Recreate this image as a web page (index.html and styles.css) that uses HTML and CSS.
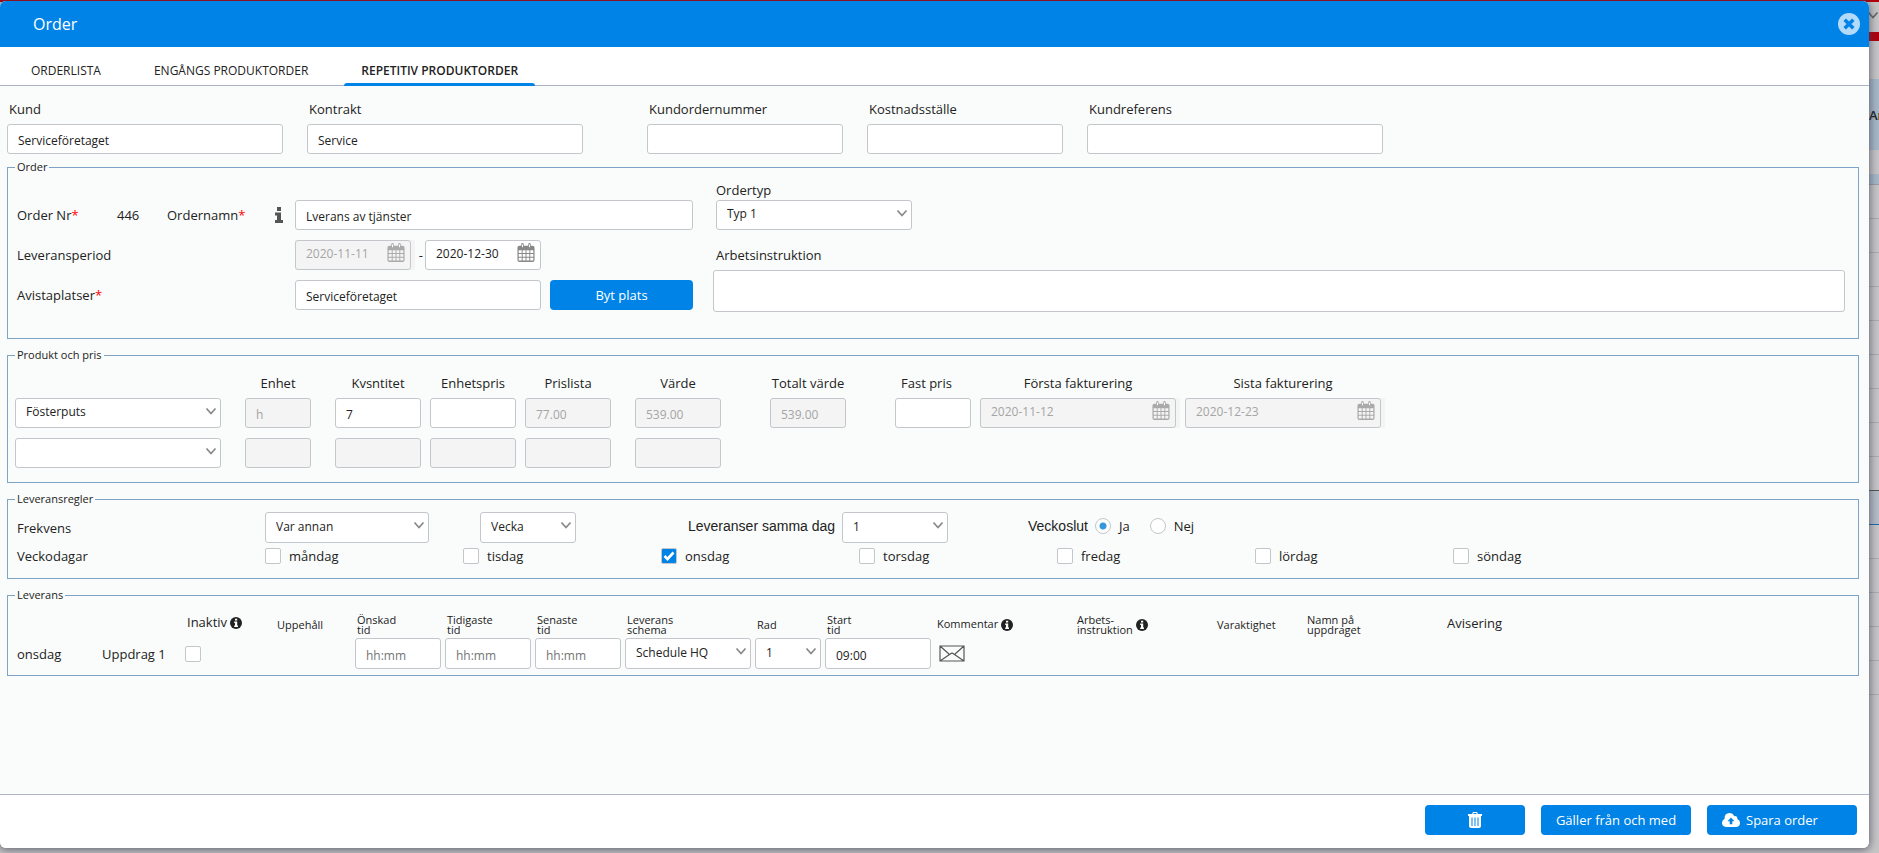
FILE: index.html
```
<!DOCTYPE html>
<html lang="sv">
<head>
  <meta charset="UTF-8">
  <meta name="viewport" content="width=device-width, initial-scale=1.0">
  <title>Order</title>
  <link rel="stylesheet" href="styles.css">
</head>
<body>
  <svg class="sprite" aria-hidden="true">
    <symbol id="chevron" viewBox="0 0 12 8"><path d="M1.500 1.500 6 6.500 10.500 1.500" fill="none" stroke="currentColor" stroke-width="1.700"/></symbol>
    <symbol id="calendar" viewBox="0 0 18 20">
      <path fill="currentColor" fill-rule="evenodd" d="M2 3h2V1.500Q4 0 5.300 0T6.600 1.500V3h4.800V1.500Q11.400 0 12.700 0T14 1.500V3h2q2 0 2 2v13q0 2-2 2H2q-2 0-2-2V5q0-2 2-2zM1.300 7.500v3h3.200v-3zm4.200 0v3h3v-3zm4 0v3h3v-3zm4 0v3h3.200v-3zm-12.200 4v3h3.200v-3zm4.200 0v3h3v-3zm4 0v3h3v-3zm4 0v3h3.200v-3zm-12.200 4v3h3.200v-3zm4.200 0v3h3v-3zm4 0v3h3v-3zm4 0v3h3.200v-3z"/>
      <path d="M5.300 1.500v3M12.700 1.500v3" stroke="#fff" stroke-width="1"/>
    </symbol>
    <symbol id="info" viewBox="0 0 12 12">
      <circle cx="6" cy="6" r="6" fill="currentColor"/>
      <path fill="#fff" d="M5 1.700h2.200v1.800H5zM4.200 4.500h3v4h.8V10H4.200V8.500H5V6h-.8z"/>
    </symbol>
  </svg>

  <div class="backdrop" aria-hidden="true">
    <div class="bar-top"><svg class="bar-icon"><use href="#chevron"/></svg></div>
    <div class="bar-gap"></div>
    <div class="bar-head">An</div>
    <div class="bar-space"></div>
    <div class="bar-filter"></div>
    <div class="bar-row"></div>
    <div class="bar-row"></div>
    <div class="bar-row"></div>
    <div class="bar-row"></div>
    <div class="bar-row"></div>
    <div class="bar-row"></div>
    <div class="bar-row"></div>
    <div class="bar-row"></div>
    <div class="bar-row dark"></div>
    <div class="bar-row selected"></div>
    <div class="bar-row"></div>
    <div class="bar-row"></div>
    <div class="bar-row"></div>
    <div class="bar-row"></div>
    <div class="bar-row"></div>
  </div>

  <form class="dialog">
    <header class="dialog-header">
      <h1>Order</h1>
      <button type="button" class="close" aria-label="Stäng">
        <svg viewBox="0 0 21 21"><circle cx="10.500" cy="10.500" r="10.500" fill="#b3daf8"/><path d="M6.400 6.400l8.200 8.200M14.600 6.400l-8.200 8.200" stroke="#0083e6" stroke-width="3.400"/></svg>
      </button>
    </header>

    <nav class="tabs">
      <a href="#orderlista">ORDERLISTA</a>
      <a href="#engangs">ENGÅNGS PRODUKTORDER</a>
      <a href="#repetitiv" class="active">REPETITIV PRODUKTORDER</a>
    </nav>

    <main class="dialog-body">
      <div class="customer">
        <div class="field wide"><label for="kund">Kund</label><input type="text" id="kund" value="Serviceföretaget"></div>
        <div class="field wide contract"><label for="kontrakt">Kontrakt</label><input type="text" id="kontrakt" value="Service"></div>
        <div class="field"><label for="kundorder">Kundordernummer</label><input type="text" id="kundorder"></div>
        <div class="field"><label for="kostnad">Kostnadsställe</label><input type="text" id="kostnad"></div>
        <div class="field reference"><label for="kundref">Kundreferens</label><input type="text" id="kundref"></div>
      </div>

      <fieldset class="order">
        <legend>Order</legend>
        <div class="order-left">
          <div class="row">
            <div class="row-label">
              <span class="nr-label">Order Nr<b>*</b></span>
              <span class="nr">446</span>
              <label for="ordernamn">Ordernamn<b>*</b></label>
              <svg class="info-i" viewBox="0 0 8 16"><path fill="#555" d="M2 0h4v4H2zM0 5.500h6V13h2v3H0v-3h2V8.500H0z"/></svg>
            </div>
            <input type="text" id="ordernamn" class="grow" value="Lverans av tjänster">
          </div>
          <div class="row">
            <label class="row-label" for="period-from">Leveransperiod</label>
            <div class="date disabled"><input type="text" id="period-from" value="2020-11-11" disabled><svg><use href="#calendar"/></svg></div>
            <span class="dash">-</span>
            <div class="date"><input type="text" aria-label="Till datum" value="2020-12-30"><svg><use href="#calendar"/></svg></div>
          </div>
          <div class="row">
            <label class="row-label" for="plats">Avistaplatser<b>*</b></label>
            <input type="text" id="plats" class="grow" value="Serviceföretaget">
            <button type="button" class="btn place">Byt plats</button>
          </div>
        </div>
        <div class="order-right">
          <label for="ordertyp">Ordertyp</label>
          <div class="select type"><select id="ordertyp"><option>Typ 1</option></select><svg><use href="#chevron"/></svg></div>
          <label for="instruktion" class="instruction-label">Arbetsinstruktion</label>
          <textarea id="instruktion"></textarea>
        </div>
      </fieldset>

      <fieldset class="product">
        <legend>Produkt och pris</legend>
        <div class="col name">
          <span></span>
          <div class="select"><select aria-label="Produkt 1"><option>Fösterputs</option></select><svg><use href="#chevron"/></svg></div>
          <div class="select"><select aria-label="Produkt 2"><option></option></select><svg><use href="#chevron"/></svg></div>
        </div>
        <div class="col unit gap-md"><label for="enhet">Enhet</label><input type="text" id="enhet" value="h" disabled><input type="text" aria-label="Enhet 2" disabled></div>
        <div class="col gap-md"><label for="kvantitet">Kvsntitet</label><input type="text" id="kvantitet" value="7"><input type="text" aria-label="Kvsntitet 2" disabled></div>
        <div class="col"><label for="enhetspris">Enhetspris</label><input type="text" id="enhetspris"><input type="text" aria-label="Enhetspris 2" disabled></div>
        <div class="col"><label for="prislista">Prislista</label><input type="text" id="prislista" value="77.00" disabled><input type="text" aria-label="Prislista 2" disabled></div>
        <div class="col gap-md"><label for="varde">Värde</label><input type="text" id="varde" value="539.00" disabled><input type="text" aria-label="Värde 2" disabled></div>
        <div class="col total gap-lg"><label for="totalt">Totalt värde</label><input type="text" id="totalt" value="539.00" disabled></div>
        <div class="col total gap-lg fixed"><label for="fastpris">Fast pris</label><input type="text" id="fastpris"></div>
        <div class="col invoice"><label for="forsta">Första fakturering</label><div class="date disabled"><input type="text" id="forsta" value="2020-11-12" disabled><svg><use href="#calendar"/></svg></div></div>
        <div class="col invoice"><label for="sista">Sista fakturering</label><div class="date disabled"><input type="text" id="sista" value="2020-12-23" disabled><svg><use href="#calendar"/></svg></div></div>
      </fieldset>

      <fieldset class="rules">
        <legend>Leveransregler</legend>
        <div class="row">
          <label class="rule-label" for="frekvens">Frekvens</label>
          <div class="select freq"><select id="frekvens"><option>Var annan</option></select><svg><use href="#chevron"/></svg></div>
          <div class="select week"><select aria-label="Period"><option>Vecka</option></select><svg><use href="#chevron"/></svg></div>
          <label class="plain same-day" for="sammadag">Leveranser samma dag</label>
          <div class="select count"><select id="sammadag"><option>1</option></select><svg><use href="#chevron"/></svg></div>
          <span class="plain weekend">Veckoslut</span>
          <label class="check yes"><input type="radio" name="veckoslut" checked>Ja</label>
          <label class="check no"><input type="radio" name="veckoslut">Nej</label>
        </div>
        <div class="row days">
          <span class="rule-label">Veckodagar</span>
          <label class="check"><input type="checkbox">måndag</label>
          <label class="check"><input type="checkbox">tisdag</label>
          <label class="check"><input type="checkbox" checked>onsdag</label>
          <label class="check"><input type="checkbox">torsdag</label>
          <label class="check"><input type="checkbox">fredag</label>
          <label class="check"><input type="checkbox">lördag</label>
          <label class="check"><input type="checkbox">söndag</label>
        </div>
      </fieldset>

      <fieldset class="delivery">
        <legend>Leverans</legend>
        <table>
          <colgroup>
            <col class="c-day"><col class="c-task"><col class="c-time"><col class="c-pause"><col class="c-time"><col class="c-time"><col class="c-time">
            <col class="c-schema"><col class="c-row"><col class="c-start"><col class="c-wide"><col class="c-wide"><col class="c-time"><col class="c-wide"><col>
          </colgroup>
          <thead>
            <tr>
              <th></th>
              <th></th>
              <th class="big">Inaktiv <svg class="info"><use href="#info"/></svg></th>
              <th>Uppehåll</th>
              <th>Önskad<br>tid</th>
              <th>Tidigaste<br>tid</th>
              <th>Senaste<br>tid</th>
              <th>Leverans<br>schema</th>
              <th>Rad</th>
              <th>Start<br>tid</th>
              <th>Kommentar <svg class="info"><use href="#info"/></svg></th>
              <th><span class="two">Arbets-<br>instruktion</span> <svg class="info"><use href="#info"/></svg></th>
              <th>Varaktighet</th>
              <th>Namn på<br>uppdraget</th>
              <th class="big">Avisering</th>
            </tr>
          </thead>
          <tbody>
            <tr>
              <td class="text">onsdag</td>
              <td>Uppdrag 1</td>
              <td><input type="checkbox" aria-label="Inaktiv"></td>
              <td></td>
              <td><input type="text" aria-label="Önskad tid" placeholder="hh:mm"></td>
              <td><input type="text" aria-label="Tidigaste tid" placeholder="hh:mm"></td>
              <td><input type="text" aria-label="Senaste tid" placeholder="hh:mm"></td>
              <td><div class="select"><select aria-label="Leveransschema"><option>Schedule HQ</option></select><svg><use href="#chevron"/></svg></div></td>
              <td><div class="select"><select aria-label="Rad"><option>1</option></select><svg><use href="#chevron"/></svg></div></td>
              <td><input type="text" aria-label="Starttid" value="09:00"></td>
              <td>
                <button type="button" class="mail" aria-label="Kommentar">
                  <svg viewBox="0 0 26 17"><path d="M1 1h24v15H1zM1 1l9.500 8.500 2.500-1.500 2.500 1.500L25 1M1 16l9.500-6.500M25 16l-9.500-6.500" fill="none" stroke="#555" stroke-width="1.200"/></svg>
                </button>
              </td>
              <td></td>
              <td></td>
              <td></td>
              <td></td>
            </tr>
          </tbody>
        </table>
      </fieldset>
    </main>

    <footer class="dialog-footer">
      <button type="button" class="btn delete" aria-label="Ta bort">
        <svg viewBox="0 0 14 16"><path fill="#fff" fill-rule="evenodd" d="M4 2l1-2h4l1 2h4v2h-1v10q0 2-2 2H3q-2 0-2-2V4H0V2zM5.300 2h3.400l-.5-.9H5.800zM3.500 5.500V14h1V5.500zm3 0V14h1V5.500zm3 0V14h1V5.500z"/></svg>
      </button>
      <button type="button" class="btn">Gäller från och med</button>
      <button type="submit" class="btn save">
        <svg viewBox="0 0 18 14"><path fill="#fff" fill-rule="evenodd" d="M4 14Q0 13.500 0 9.800 0 7.200 2.500 6 2.300 0 7.500 0q3.400 0 4.700 3.200 3-.8 3.300 3Q18 7 18 10q0 3.500-3.500 4zM9 4.500L5.500 8.200h2.200v3h2.600v-3h2.200z"/></svg>
        Spara order
      </button>
    </footer>
  </form>
</body>
</html>
```
FILE: styles.css
```
* {
  box-sizing: border-box;
}

body {
  margin: 0;
  font-family: "Open Sans", "Noto Sans", sans-serif;
  font-size: 13px;
  line-height: 20px;
  color: #222;
  background-color: #c6c6c7;
}

input,
select,
textarea,
button {
  font-family: inherit;
  font-size: 12px;
  color: #222;
}

b {
  color: #f00;
  font-weight: normal;
}

.sprite {
  position: absolute;
  width: 0;
  height: 0;
}

/* Page behind the dialog */
.backdrop {
  position: absolute;
  inset: 0;
  overflow: hidden;
  display: flex;
  flex-direction: column;
  align-items: stretch;
}

.bar-top {
  height: 41px;
  border-top: 2px solid #b0000c;
  border-bottom: 9px solid #b0000c;
  display: flex;
  justify-content: flex-end;
}

.bar-icon {
  width: 12px;
  height: 8px;
  margin-top: 9px;
  color: #666;
}

.bar-gap {
  height: 38px;
}

.bar-head {
  height: 71px;
  padding-left: calc(100% - 10px);
  line-height: 72px;
  white-space: nowrap;
  font-weight: 600;
  background-color: #a6b8c8;
}

.bar-space {
  height: 24px;
}

.bar-filter {
  height: 11px;
  background-color: #a6b8c8;
  border-bottom: 1px solid #999ca6;
}

.bar-row {
  height: 34px;
  border-bottom: 1px solid #aaacb0;
}

.bar-row.dark {
  border-color: #555;
}

.bar-row.selected {
  background-color: #b4bdc7;
  border-color: #1a68ad;
}

/* Dialog */
.dialog {
  position: relative;
  display: flex;
  flex-direction: column;
  min-height: calc(100vh - 6px);
  margin: 1px 10px 5px 0;
  background-color: #fafcfb;
  border-radius: 6px;
  overflow: hidden;
  box-shadow: 0 1px 8px 1px rgba(60, 60, 80, 0.7);
}

.dialog-header {
  display: flex;
  justify-content: space-between;
  align-items: center;
  height: 46px;
  padding: 0 9px 0 33px;
  background-color: #0083e6;
}

h1 {
  margin: 0;
  font-size: 16px;
  font-weight: normal;
  color: #fff;
}

.close {
  width: 22px;
  height: 22px;
  padding: 0;
  border: none;
  background: none;
  cursor: pointer;
}

.close svg {
  display: block;
  width: 22px;
  height: 22px;
}

.tabs {
  display: flex;
  gap: 19px;
  height: 39px;
  padding-left: 14px;
  background-color: #fff;
  border-bottom: 1px solid #abb4c4;
}

.tabs a {
  position: relative;
  height: 39px;
  padding: 14px 17px 0;
  font-size: 12px;
  line-height: 20px;
  color: #222;
  text-decoration: none;
}

.tabs a.active {
  font-weight: 600;
}

.tabs a.active::after {
  content: "";
  position: absolute;
  left: 0;
  right: 0;
  bottom: 0;
  height: 3px;
  border-radius: 3px 3px 0 0;
  background-color: #0083e6;
}

.dialog-body {
  flex: 1;
  padding: 13px 10px 20px 7px;
}

/* Inputs */
input[type="text"],
select,
textarea {
  display: block;
  width: 100%;
  height: 30px;
  border: 1px solid #c3c6cb;
  border-radius: 3px;
  background-color: #fff;
  outline: none;
}

input[type="text"] {
  padding: 3px 4px 0 10px;
}

input[type="text"]:disabled {
  color: #a5a5a5;
  background-color: #f4f4f4;
}

input::placeholder {
  color: #757575;
}

.select {
  position: relative;
}

.select select {
  appearance: none;
  padding: 0 20px 3px 10px;
}

.select svg {
  position: absolute;
  top: 9px;
  right: 4px;
  width: 12px;
  height: 8px;
  color: #888;
  pointer-events: none;
}

.date {
  position: relative;
  width: 116px;
}

.date input[type="text"] {
  padding: 0 30px 3px 10px;
}

.date svg {
  position: absolute;
  top: 3px;
  right: 6px;
  width: 18px;
  height: 19px;
  color: #888;
}

.date.disabled {
  background-color: #f4f4f4;
  box-shadow: 4px 0 0 #f4f4f4;
}

.date.disabled svg {
  color: #aaa;
}

input[type="checkbox"],
input[type="radio"] {
  appearance: none;
  flex: none;
  display: block;
  width: 16px;
  height: 16px;
  margin: 0;
  border: 1px solid #c3c6cb;
  border-radius: 2px;
  background-color: #fff;
}

input[type="radio"] {
  border-radius: 50%;
}

input[type="radio"]:checked {
  background-image: radial-gradient(circle, #3498db 3px, transparent 4px);
}

input[type="checkbox"]:checked {
  background: #0083e6 url("data:image/svg+xml,%3Csvg xmlns='http://www.w3.org/2000/svg' viewBox='0 0 14 14'%3E%3Cpath d='M2.500 7l3 3 6-6.500' fill='none' stroke='%23fff' stroke-width='2.600'/%3E%3C/svg%3E");
}

.check {
  display: flex;
  align-items: center;
  gap: 8px;
}

.btn {
  display: flex;
  align-items: center;
  justify-content: center;
  width: 150px;
  height: 30px;
  padding: 0;
  border: none;
  border-radius: 4px;
  font-size: 13px;
  color: #fff;
  background-color: #0083e6;
  cursor: pointer;
}

.btn:hover {
  background-color: #0071c7;
}

.row {
  display: flex;
  align-items: center;
}

.grow {
  flex: 1;
}

/* Customer */
.customer {
  display: flex;
  gap: 24px;
  margin-bottom: 6px;
}

.field {
  width: 196px;
}

.field.wide {
  width: 276px;
}

.field.contract {
  margin-right: 40px;
}

.field.reference {
  width: 296px;
}

.field label {
  display: block;
  padding-left: 2px;
  margin-bottom: 5px;
}

/* Fieldsets */
fieldset {
  min-width: 0;
  margin: 0 0 9px;
  padding: 0 13px 0 7px;
  border: 1px solid #7fa3c7;
}

legend {
  padding: 0 2px;
  font-size: 11px;
  line-height: 14px;
}

.order {
  display: flex;
  gap: 20px;
  padding-top: 6px;
  padding-bottom: 26px;
}

.order-left {
  display: flex;
  flex-direction: column;
  gap: 10px;
  width: 678px;
  padding-top: 20px;
}

.row-label {
  display: flex;
  align-items: center;
  width: 280px;
  padding-left: 2px;
}

.nr-label {
  width: 100px;
}

.nr {
  width: 50px;
}

.info-i {
  width: 8px;
  height: 16px;
  margin: 0 12px 0 auto;
}

.dash {
  width: 14px;
  text-align: right;
  padding-right: 2px;
}

.place {
  width: 143px;
  margin-left: 9px;
}

.order-right {
  flex: 1;
  display: flex;
  flex-direction: column;
}

.order-right label {
  padding-left: 3px;
}

.type {
  width: 196px;
  margin-left: 3px;
}

.order-right .instruction-label {
  margin: 15px 0 5px;
}

textarea {
  height: 42px;
  padding: 6px 10px;
  resize: none;
}

.product {
  display: flex;
  gap: 9px;
  padding-top: 11px;
  padding-bottom: 14px;
}

.col {
  display: flex;
  flex-direction: column;
  gap: 10px;
  width: 86px;
}

.col > :first-child {
  height: 20px;
  margin-bottom: -5px;
  text-align: center;
  white-space: nowrap;
}

.col.name {
  width: 206px;
}

.col.unit {
  width: 66px;
}

.col.total {
  width: 76px;
}

.col.fixed label {
  padding-left: 6px;
  text-align: left;
}

.col.invoice,
.col.invoice .date {
  width: 196px;
}

.gap-md {
  margin-left: 15px;
}

.gap-lg {
  margin-left: 40px;
}

.rules {
  padding-top: 6px;
  padding-bottom: 12px;
}

.rules select,
.delivery select,
.delivery input[type="text"] {
  height: 31px;
}

.rule-label {
  width: 250px;
  padding-left: 2px;
}

.freq {
  width: 164px;
}

.week {
  width: 96px;
  margin-left: 51px;
}

.plain {
  padding-bottom: 3px;
  font-family: "Liberation Sans", Arial, sans-serif;
  font-size: 14px;
}

.same-day {
  width: 154px;
  margin-left: 112px;
}

.count {
  width: 106px;
}

.weekend {
  width: 67px;
  margin-left: 80px;
}

.check.yes,
.check.no {
  padding-bottom: 3px;
}

.check.no {
  margin-left: 20px;
}

.days {
  margin-top: 3px;
}

.days .check {
  width: 198px;
}

.delivery {
  padding-top: 8px;
  padding-bottom: 6px;
}

table {
  width: 100%;
  table-layout: fixed;
  border-collapse: collapse;
}

.c-day {
  width: 87px;
}

.c-task {
  width: 83px;
}

.c-time {
  width: 90px;
}

.c-pause {
  width: 80px;
}

.c-schema {
  width: 130px;
}

.c-row {
  width: 70px;
}

.c-start {
  width: 110px;
}

.c-wide {
  width: 140px;
}

th {
  height: 28px;
  padding: 2px 0 0 2px;
  font-size: 11px;
  font-weight: normal;
  line-height: 10px;
  text-align: left;
  white-space: nowrap;
}

th.big {
  padding-bottom: 4px;
  font-size: 13px;
}

.two {
  display: inline-block;
  vertical-align: middle;
}

.info {
  width: 12px;
  height: 12px;
  vertical-align: middle;
}

td {
  padding: 0 4px 0 0;
}

td.text {
  padding-left: 2px;
}

.mail {
  display: block;
  margin-left: 4px;
  padding: 0;
  border: none;
  background: none;
  cursor: pointer;
}

.mail svg {
  display: block;
  width: 26px;
  height: 17px;
}

/* Footer */
.dialog-footer {
  display: flex;
  justify-content: flex-end;
  gap: 16px;
  padding: 10px 12px 13px;
  background-color: #fff;
  border-top: 1px solid #b1b4c4;
}

.delete {
  width: 100px;
}

.delete svg {
  width: 14px;
  height: 16px;
}

.save {
  justify-content: flex-start;
  gap: 6px;
  padding-left: 15px;
}

.save svg {
  width: 18px;
  height: 14px;
}
```
